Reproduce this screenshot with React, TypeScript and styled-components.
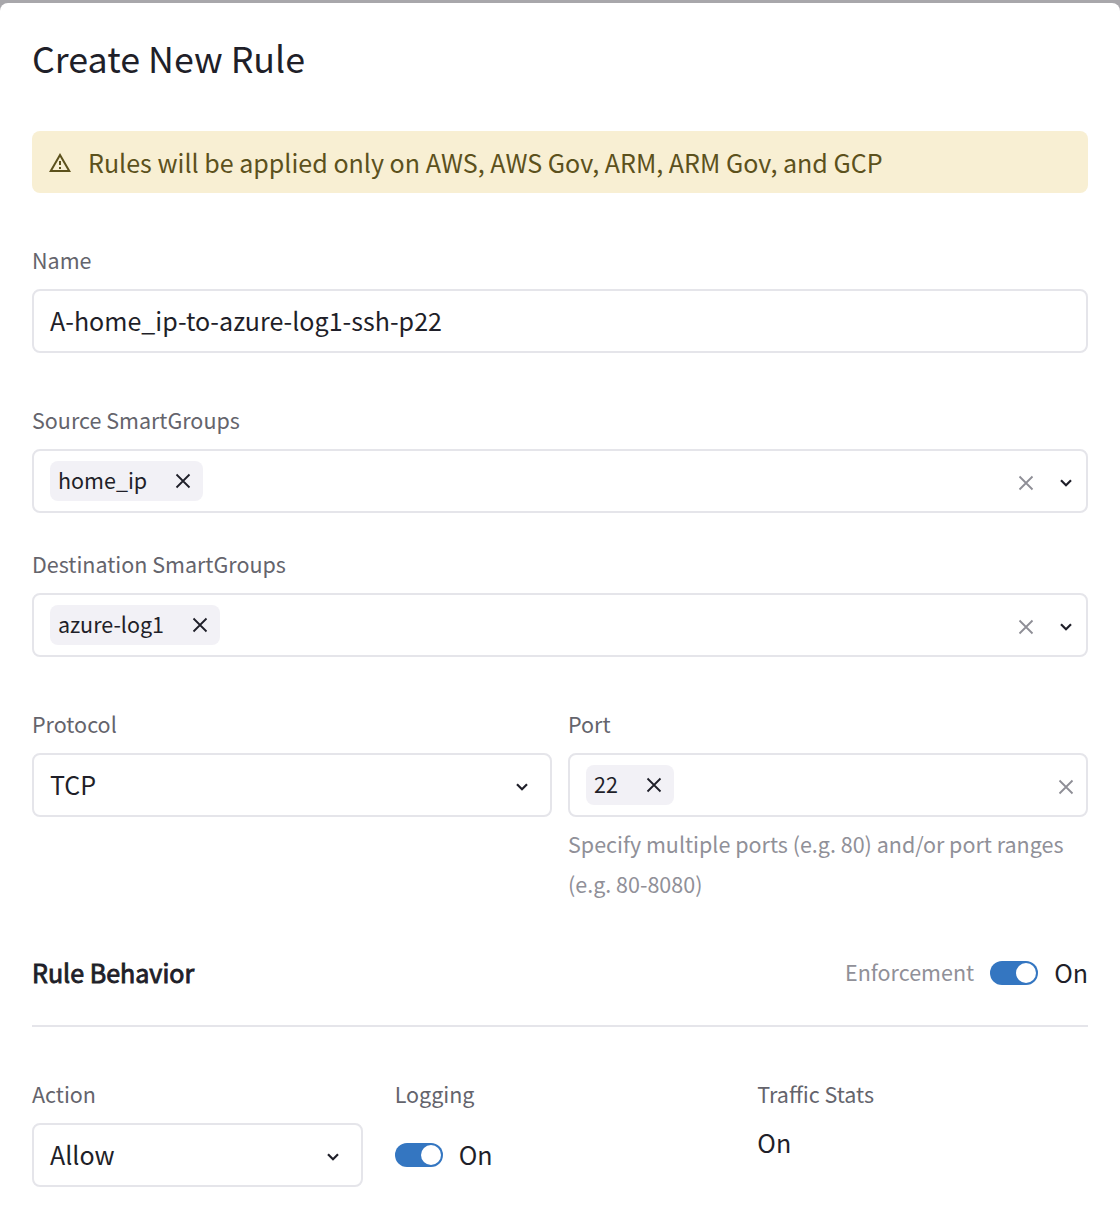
import React from 'react';
import styled, { createGlobalStyle } from 'styled-components';

const Global = createGlobalStyle`
  *, *::before, *::after { box-sizing: border-box; }
  html, body { margin: 0; background: #a8a7ab; }
  body { font-family: "Noto Sans CJK SC", "Noto Sans CJK JP", sans-serif; color: #1f1f29; }
`;

const Backdrop = styled.div`
  height: 1232px;
  padding-top: 3px;
  background: #a8a7ab;
  overflow: hidden;
`;

const Panel = styled.main`
  height: 1229px;
  padding: 32px 32px 0;
  background: #fff;
  border-radius: 8px 8px 0 0;
`;

const Title = styled.h1`
  margin: 0;
  height: 48px;
  font-size: 35.8px;
  font-weight: 400;
  line-height: 44px;
`;

const Notice = styled.div`
  display: flex;
  align-items: center;
  gap: 16px;
  height: 62px;
  margin-top: 48px;
  padding: 2px 16px 0;
  border-radius: 8px;
  background: #f8efd3;
  color: #5c511c;
  font-size: 25.05px;
`;

const Text = styled.span`
  padding-bottom: 2px;
  line-height: 38px;
`;

const Field = styled.div<{ $top?: number }>`
  display: flex;
  flex-direction: column;
  margin-top: ${p => p.$top ?? 0}px;
`;

const Label = styled.span`
  height: 40px;
  margin-bottom: 8px;
  font-size: 21.5px;
  line-height: 38px;
  color: #64646c;
`;

const Control = styled.div<{ $end?: number }>`
  display: flex;
  align-items: center;
  height: 64px;
  padding: 0 ${p => p.$end ?? 16}px 0 16px;
  border: 2px solid #e5e5ea;
  border-radius: 8px;
  font-size: 25.05px;
`;

const Tag = styled.span`
  display: flex;
  align-items: center;
  gap: 28px;
  height: 40px;
  padding: 0 12px 0 8px;
  border-radius: 8px;
  background: #f2f1f6;
  font-size: 21.5px;
`;

const Actions = styled.span`
  display: flex;
  align-items: center;
  gap: 16px;
  margin: 4px 0 0 auto;
`;

const IconSlot = styled.span`
  display: flex;
  align-items: center;
  justify-content: center;
  width: 24px;
  height: 24px;
`;

const Columns = styled.div<{ $gap: number; $count: number }>`
  display: grid;
  grid-template-columns: repeat(${p => p.$count}, 1fr);
  gap: ${p => p.$gap}px;
  margin-top: 48px;
`;

const Hint = styled.p`
  margin: 7px 0 1px;
  color: #909098;
  font-size: 21.5px;
  line-height: 40px;
`;

const SectionHead = styled.div`
  display: flex;
  align-items: center;
  justify-content: space-between;
  margin-top: 48px;
  padding-bottom: 32px;
  border-bottom: 2px solid #e5e5ea;
`;

const SectionTitle = styled.h2`
  margin: 0;
  padding-bottom: 2px;
  font-size: 25.05px;
  font-weight: 400;
  line-height: 38px;
  -webkit-text-stroke: 0.9px currentColor;
`;

const Row = styled.div<{ $height: number }>`
  display: flex;
  align-items: center;
  gap: 16px;
  height: ${p => p.$height}px;
  font-size: 25.05px;
`;

const Muted = styled(Text)`
  color: #909098;
  font-size: 21.5px;
`;

const Track = styled.span`
  display: flex;
  justify-content: flex-end;
  width: 48px;
  height: 24px;
  padding: 2px;
  border-radius: 12px;
  background: #3476c1;
  &::after {
    content: '';
    width: 20px;
    height: 20px;
    border-radius: 50%;
    background: #fff;
  }
`;

const StatValue = styled(Text)`
  font-size: 25.05px;
`;

const Cross = ({ color = '#1f1f29' }: { color?: string }) => (
  <svg width="16" height="16" viewBox="0 0 16 16" fill="none" stroke={color} strokeWidth="1.8">
    <path d="M1.5 1.5 14.5 14.5M14.5 1.5 1.5 14.5" />
  </svg>
);

const Chevron = () => (
  <svg width="12" height="8" viewBox="0 0 12 8" fill="none" stroke="#1f1f29" strokeWidth="2.2">
    <path d="M1 1.2 6 6.2 11 1.2" />
  </svg>
);

const WarningIcon = () => (
  <svg width="24" height="24" viewBox="0 0 24 24" fill="currentColor">
    <path d="M12 5.99 19.53 19H4.47L12 5.99M12 2 1 21h22L12 2zm1 14h-2v2h2v-2zm0-6h-2v4h2v-4z" />
  </svg>
);

const TagItem = ({ text }: { text: string }) => (
  <Tag>
    <Text>{text}</Text>
    <Cross />
  </Tag>
);

const MultiSelect = ({ tag, menu = true }: { tag: string; menu?: boolean }) => (
  <Control $end={8}>
    <TagItem text={tag} />
    <Actions>
      <IconSlot><Cross color="#8e8e96" /></IconSlot>
      {menu && <IconSlot><Chevron /></IconSlot>}
    </Actions>
  </Control>
);

const Select = ({ value }: { value: string }) => (
  <Control>
    <Text>{value}</Text>
    <Actions>
      <IconSlot><Chevron /></IconSlot>
    </Actions>
  </Control>
);

export default function App() {
  return (
    <Backdrop>
      <Global />
      <Panel>
        <Title>Create New Rule</Title>
        <Notice>
          <WarningIcon />
          <Text>Rules will be applied only on AWS, AWS Gov, ARM, ARM Gov, and GCP</Text>
        </Notice>
        <Field $top={48}>
          <Label>Name</Label>
          <Control><Text>A-home_ip-to-azure-log1-ssh-p22</Text></Control>
        </Field>
        <Field $top={48}>
          <Label>Source SmartGroups</Label>
          <MultiSelect tag="home_ip" />
        </Field>
        <Field $top={32}>
          <Label>Destination SmartGroups</Label>
          <MultiSelect tag="azure-log1" />
        </Field>
        <Columns $gap={16} $count={2}>
          <Field>
            <Label>Protocol</Label>
            <Select value="TCP" />
          </Field>
          <Field>
            <Label>Port</Label>
            <MultiSelect tag="22" menu={false} />
            <Hint>Specify multiple ports (e.g. 80) and/or port ranges (e.g. 80-8080)</Hint>
          </Field>
        </Columns>
        <SectionHead>
          <SectionTitle>Rule Behavior</SectionTitle>
          <Row $height={40}>
            <Muted>Enforcement</Muted>
            <Track />
            <Text>On</Text>
          </Row>
        </SectionHead>
        <Columns $gap={32} $count={3}>
          <Field>
            <Label>Action</Label>
            <Select value="Allow" />
          </Field>
          <Field>
            <Label>Logging</Label>
            <Row $height={64}>
              <Track />
              <Text>On</Text>
            </Row>
          </Field>
          <Field>
            <Label>Traffic Stats</Label>
            <StatValue>On</StatValue>
          </Field>
        </Columns>
      </Panel>
    </Backdrop>
  );
}
